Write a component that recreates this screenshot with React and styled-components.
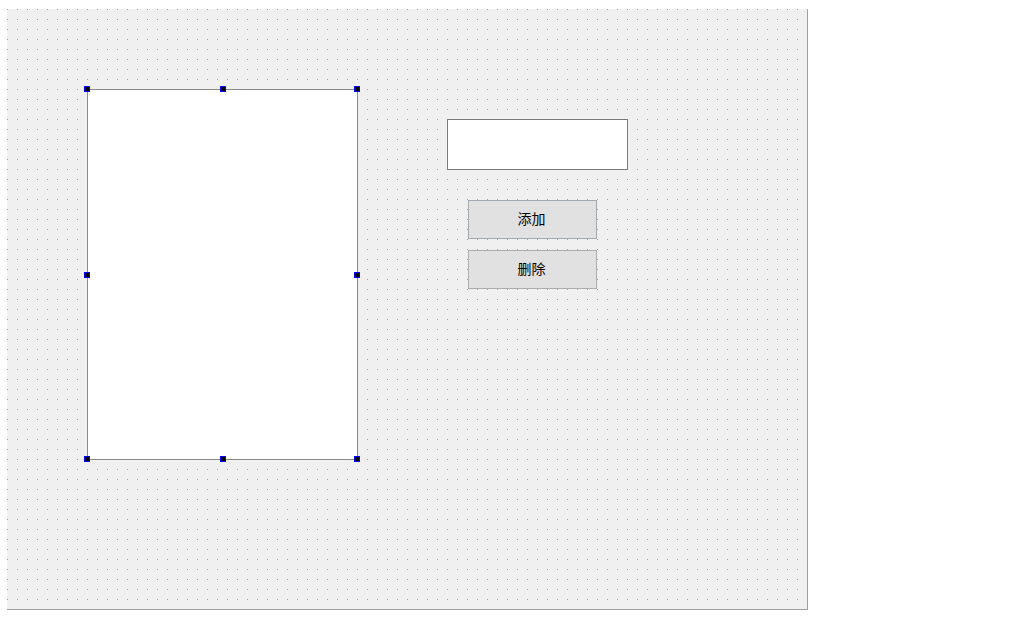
import React from "react";
import styled, { createGlobalStyle } from "styled-components";

const Global = createGlobalStyle`
  html, body { margin: 0; padding: 0; background: #ffffff; }
  body { font-family: "Noto Sans CJK SC", "Noto Sans", sans-serif; }
`;

const Page = styled.div`
  padding: 9px 0 0 7px;
  width: 1030px;
  height: 627px;
  box-sizing: border-box;
`;

const FormCanvas = styled.div`
  width: 801px;
  height: 601px;
  box-sizing: border-box;
  border-right: 1px solid #a0a0a0;
  border-bottom: 1px solid #a0a0a0;
  background-color: #f0f0f0;
  background-image:
    linear-gradient(to right, transparent 1px, #f0f0f0 1px),
    linear-gradient(to bottom, #a0a0a0 1px, #f0f0f0 1px);
  background-size: 10px 10px;
  background-position: 0 0;
  padding: 80px 0 0 80px;
  display: flex;
  align-items: flex-start;
`;

const Selected = styled.div`
  position: relative;
  width: 271px;
  height: 371px;
`;

const ListBox = styled.div`
  width: 100%;
  height: 100%;
  box-sizing: border-box;
  background: #ffffff;
  border: 1px solid #8a8a8a;
`;

const Handle = styled.span`
  position: absolute;
  width: 6px;
  height: 6px;
  box-sizing: border-box;
  background: #000000;
  border: 1px solid #0000ff;
  left: ${(p) => p.$x};
  top: ${(p) => p.$y};
  transform: translate(-3px, -3px);
`;

const RightColumn = styled.div`
  margin: 30px 0 0 89px;
  display: flex;
  flex-direction: column;
`;

const LineEdit = styled.div`
  width: 181px;
  height: 51px;
  box-sizing: border-box;
  background: #ffffff;
  border: 1px solid #7a7a7a;
`;

const ButtonStack = styled.div`
  margin: 30px 0 0 21px;
  display: flex;
  flex-direction: column;
  gap: 11px;
`;

const PushButton = styled.button`
  width: 129px;
  height: 39px;
  box-sizing: border-box;
  margin: 0;
  padding: 0 2px 3px 0;
  background: #e1e1e1;
  border: 1px solid ${(p) => (p.$focus ? "#a3a9b0" : "#adadad")};
  font-family: "Noto Sans CJK SC", "Noto Sans", sans-serif;
  font-size: 14px;
  color: #000000;
  display: flex;
  align-items: center;
  justify-content: center;
  line-height: 1;
`;

const handles = [
  ["0px", "0px"],
  ["50%", "0px"],
  ["calc(100% - 1px)", "0px"],
  ["0px", "50%"],
  ["calc(100% - 1px)", "50%"],
  ["0px", "calc(100% - 1px)"],
  ["50%", "calc(100% - 1px)"],
  ["calc(100% - 1px)", "calc(100% - 1px)"],
];

export default function App() {
  return (
    <>
      <Global />
      <Page>
        <FormCanvas>
          <Selected>
            <ListBox />
            {handles.map(([x, y], i) => (
              <Handle key={i} $x={x} $y={y} />
            ))}
          </Selected>
          <RightColumn>
            <LineEdit />
            <ButtonStack>
              <PushButton $focus>添加</PushButton>
              <PushButton>删除</PushButton>
            </ButtonStack>
          </RightColumn>
        </FormCanvas>
      </Page>
    </>
  );
}
